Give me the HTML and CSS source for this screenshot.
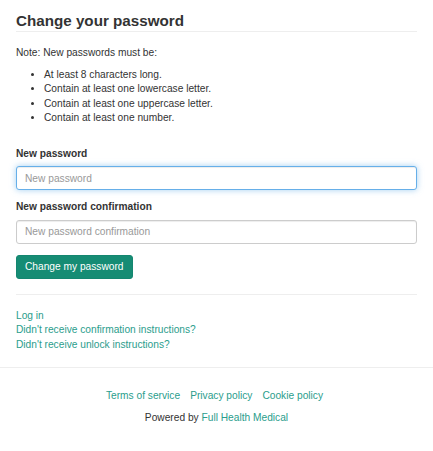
FILE: index.html
```html
<!DOCTYPE html>
<html lang="en">
<head>
<meta charset="utf-8">
<title>Change your password</title>
<link rel="stylesheet" href="styles.css">
</head>
<body>
<div class="container">
  <h1 class="title">Change your password</h1>
  <p class="note">Note: New passwords must be:</p>
  <ul class="rules">
    <li>At least 8 characters long.</li>
    <li>Contain at least one lowercase letter.</li>
    <li>Contain at least one uppercase letter.</li>
    <li>Contain at least one number.</li>
  </ul>
  <form class="form">
    <div class="field field-first">
      <label class="label" for="pw">New password</label>
      <input class="input input-focus" id="pw" type="password" placeholder="New password" autofocus>
    </div>
    <div class="field">
      <label class="label" for="pwc">New password confirmation</label>
      <input class="input" id="pwc" type="password" placeholder="New password confirmation">
    </div>
    <button class="btn" type="button">Change my password</button>
  </form>
  <hr class="sep">
  <div class="links">
    <a href="#">Log in</a>
    <a href="#">Didn't receive confirmation instructions?</a>
    <a href="#">Didn't receive unlock instructions?</a>
  </div>
</div>
<footer class="footer">
  <nav class="footer-nav">
    <a href="#">Terms of service</a>
    <a href="#">Privacy policy</a>
    <a href="#">Cookie policy</a>
  </nav>
  <p class="powered">Powered by <a href="#">Full Health Medical</a></p>
</footer>
</body>
</html>
```

FILE: styles.css
```css
* { box-sizing: border-box; }
html, body { margin: 0; padding: 0; background: #fff; }
body {
  font-family: "Liberation Sans", Arial, Helvetica, sans-serif;
  font-size: 10.2px;
  line-height: 14.5px;
  color: #333;
}
a { color: #2a9d8c; text-decoration: none; }

.container { padding: 0 16px; }

.title {
  margin: 12px 0 0;
  padding-bottom: 1px;
  font-size: 15.2px;
  line-height: 18px;
  font-weight: bold;
  color: #333;
  border-bottom: 1px solid #eee;
}

.note { margin: 14px 0 0; }

.rules {
  margin: 7px 0 0;
  padding-left: 28px;
}

.form { margin-top: 21px; }
.field { margin-top: 10px; }
.field-first { margin-top: 0; }
.label {
  display: block;
  font-weight: bold;
  margin-bottom: 5px;
}
.input {
  display: block;
  width: 100%;
  height: 24px;
  padding: 0 8px;
  font-family: inherit;
  font-size: 10.2px;
  color: #555;
  background: #fff;
  border: 1px solid #ccc;
  border-radius: 3px;
  box-shadow: inset 0 1px 1px rgba(0,0,0,.075);
  outline: none;
}
.input::placeholder { color: #999; }
.input-focus {
  border-color: #66afe9;
  box-shadow: inset 0 1px 1px rgba(0,0,0,.075), 0 0 6px rgba(102,175,233,.6);
}

.btn {
  display: block;
  margin-top: 11px;
  height: 24px;
  padding: 0 8px;
  font-family: inherit;
  font-size: 10.2px;
  color: #fff;
  background: #168c74;
  border: 1px solid #148670;
  border-radius: 3px;
}

.sep {
  margin: 15px 0 0;
  border: 0;
  border-top: 1px solid #eee;
}

.links {
  display: flex;
  flex-direction: column;
  align-items: flex-start;
  margin-top: 14px;
}

.footer {
  margin-top: 15px;
  border-top: 1px solid #eee;
  padding-top: 21px;
  text-align: center;
}
.footer-nav {
  display: flex;
  justify-content: center;
  gap: 10px;
  padding-right: 4px;
}
.powered { margin: 7px 0 0; }
```
